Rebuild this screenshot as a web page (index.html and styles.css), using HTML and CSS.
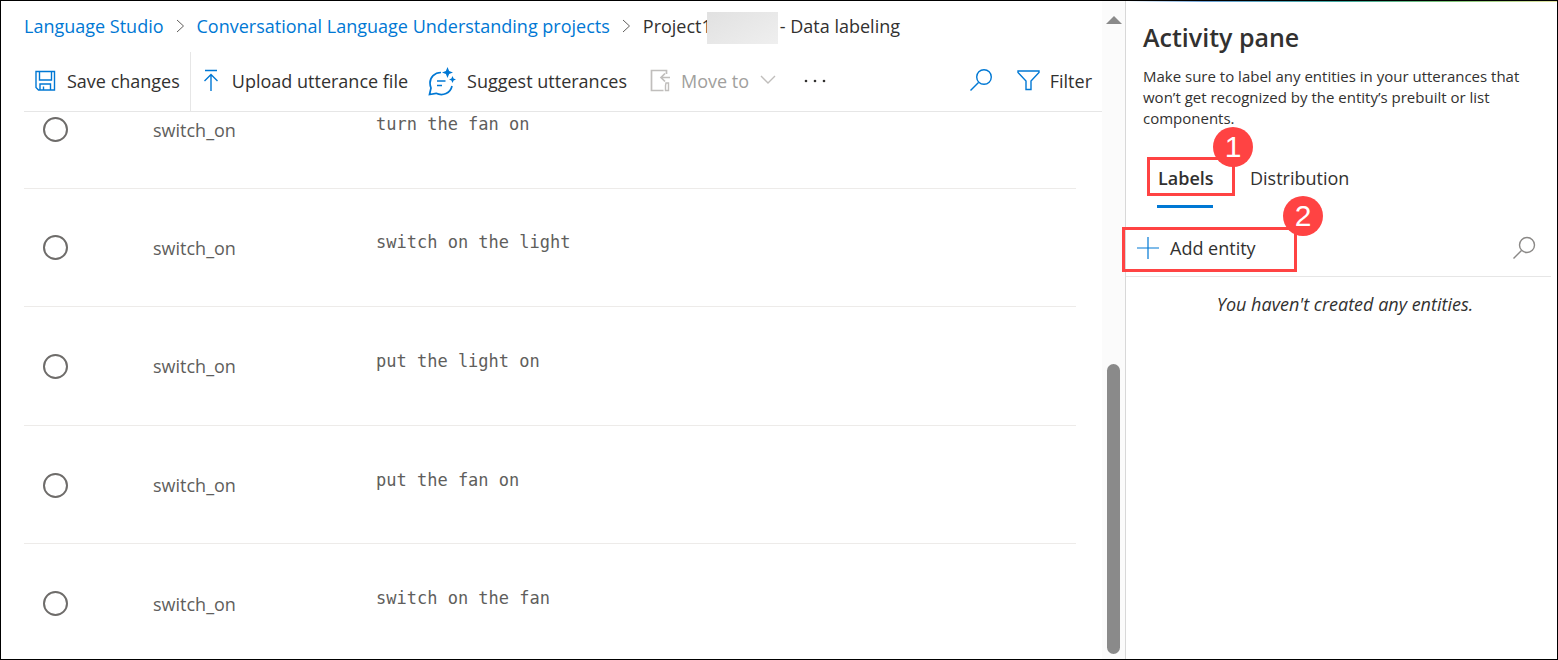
FILE: index.html
```html
<!DOCTYPE html>
<html lang="en">
<head>
<meta charset="utf-8">
<title>Data labeling - Language Studio</title>
<link rel="stylesheet" href="styles.css">
</head>
<body>
<div class="app">
  <main class="content">
    <nav class="crumbs" aria-label="Breadcrumb">
      <a href="#">Language Studio</a>
      <svg class="crumb-arrow" width="9" height="16" viewBox="0 0 9 16"><path d="M1 2l6.500 6L1 14"/></svg>
      <a href="#">Conversational Language Understanding projects</a>
      <svg class="crumb-arrow" width="9" height="16" viewBox="0 0 9 16"><path d="M1 2l6.500 6L1 14"/></svg>
      <span class="crumb-current">Project1<span class="redacted"></span>- Data labeling</span>
    </nav>
    <div class="toolbar">
      <button class="tool save" type="button">
        <svg width="21" height="22" viewBox="0 0 21 22"><path d="M1 1.500h18.500v18.500H3.500L1 17.500zM4.500 1.500v8.500h12v-8.500M5 20v-6h10.500v6M8.500 20v-3.500"/></svg>
        Save changes
      </button>
      <button class="tool upload" type="button">
        <svg width="16" height="24" viewBox="0 0 16 24"><path d="M2 1.500h12M8 22V5.500M1.500 12L8 5.500l6.500 6.500"/></svg>
        Upload utterance file
      </button>
      <button class="tool suggest" type="button">
        <svg width="28" height="30" viewBox="0 0 28 30"><path class="medium" d="M13 6.500C6.500 6.500 2 11.500 2 17c0 2 .4 3.500 1 5l-1.500 6.500 6.500-1.200c7 3.200 14.500-.3 16-7.300M9 15h8.500M9 19.500h5"/><path class="solid" d="M19.500 1l1.600 3.900L25 6.500l-3.900 1.600-1.600 3.900-1.600-3.900L14 6.500l3.900-1.600zM24.500 10l1.100 2.400 2.400 1.100-2.400 1.100-1.100 2.400-1.100-2.400-2.400-1.100 2.400-1.100z"/></svg>
        Suggest utterances
      </button>
      <button class="tool move" type="button" disabled>
        <svg width="20" height="24" viewBox="0 0 20 24"><path class="medium" d="M16.500 5V1.500H1.500v20h12M20 8.500h-8.500M15 4.500l-4 4 4 4"/><path d="M16 14h2.500v7.500h-3v-5z"/></svg>
        Move to
        <svg width="16" height="12" viewBox="0 0 16 12"><path d="M1 1l7 7 7-7"/></svg>
      </button>
      <button class="tool more" type="button" aria-label="More">
        <svg width="22" height="4" viewBox="0 0 22 4"><circle cx="2" cy="2" r="1.300"/><circle cx="11" cy="2" r="1.300"/><circle cx="20" cy="2" r="1.300"/></svg>
      </button>
      <button class="tool find" type="button" aria-label="Search">
        <svg width="24" height="24" viewBox="0 0 24 24"><circle cx="15" cy="8" r="7.300"/><path d="M9.500 13.500L1.500 21.500"/></svg>
      </button>
      <button class="tool filter" type="button">
        <svg width="23" height="22" viewBox="0 0 23 22"><path d="M1 1h21v1.500l-8 8.500v8.500h-5v-8.500L1 2.500z"/></svg>
        Filter
      </button>
    </div>
    <div class="list">
      <table class="utterances">
        <tbody>
          <tr><td class="pick"><input type="radio" name="utterance" aria-label="turn the fan on"></td><td class="intent">switch_on</td><td class="text">turn the fan on</td></tr>
          <tr><td class="pick"><input type="radio" name="utterance" aria-label="switch on the light"></td><td class="intent">switch_on</td><td class="text">switch on the light</td></tr>
          <tr><td class="pick"><input type="radio" name="utterance" aria-label="put the light on"></td><td class="intent">switch_on</td><td class="text">put the light on</td></tr>
          <tr><td class="pick"><input type="radio" name="utterance" aria-label="put the fan on"></td><td class="intent">switch_on</td><td class="text">put the fan on</td></tr>
          <tr><td class="pick"><input type="radio" name="utterance" aria-label="switch on the fan"></td><td class="intent">switch_on</td><td class="text">switch on the fan</td></tr>
        </tbody>
      </table>
    </div>
  </main>
  <div class="scrollbar">
    <svg width="16" height="8" viewBox="0 0 16 8"><path d="M0 8L8 0l8 8z"/></svg>
    <div class="thumb"></div>
  </div>
  <aside class="pane">
    <h1>Activity pane</h1>
    <p class="hint">Make sure to label any entities in your utterances that won’t get recognized by the entity’s prebuilt or list components.</p>
    <div class="tabs" role="tablist">
      <div class="tab-mark">
        <button class="tab active" type="button" role="tab" aria-selected="true">Labels</button>
        <span class="badge">1</span>
      </div>
      <button class="tab" type="button" role="tab" aria-selected="false">Distribution</button>
    </div>
    <div class="entity-bar">
      <div class="add-mark">
        <button class="add" type="button">
          <svg width="22" height="22" viewBox="0 0 22 22"><path d="M11 0v22M0 11h22"/></svg>
          Add entity
        </button>
        <span class="badge">2</span>
      </div>
      <button class="entity-find" type="button" aria-label="Search entities">
        <svg width="24" height="24" viewBox="0 0 24 24"><circle cx="15" cy="9" r="7.500"/><path d="M9.500 14.500L1.500 22.500"/></svg>
      </button>
    </div>
    <p class="empty">You haven't created any entities.</p>
  </aside>
</div>
</body>
</html>
```
FILE: styles.css
```css
* { box-sizing: border-box; }
body {
  margin: 0;
  background: #fff;
  color: #323130;
  font: 18px/24px "Segoe UI", "Open Sans", "Noto Sans", sans-serif;
}
button {
  padding: 0;
  border: 0;
  background: none;
  color: inherit;
  font: inherit;
  white-space: nowrap;
}
svg { flex: none; fill: none; stroke: currentColor; stroke-width: 1.4; }
.app {
  display: flex;
  height: 100vh;
  border: 1px solid #000;
}
.content {
  display: flex;
  flex: 1;
  flex-direction: column;
  min-width: 0;
  padding-left: 23px;
}
.crumbs {
  display: flex;
  align-items: center;
  gap: 12px;
  height: 50px;
  white-space: nowrap;
}
.crumbs a { color: #0078d4; text-decoration: none; }
.crumb-arrow { color: #605e5c; stroke-width: 1; }
.crumb-current { display: flex; align-items: center; }
.redacted {
  width: 71px;
  height: 32px;
  margin: 4px 2px 0 -5px;
  background: linear-gradient(150deg, #e1e1e1, #efefef);
}
.toolbar {
  display: flex;
  flex: none;
  height: 61px;
  padding-top: 1px;
  border-bottom: 1px solid #e6e6e6;
}
.tool { display: flex; align-items: center; gap: 11px; padding-bottom: 2px; }
.tool svg { color: #0078d4; }
.tool .medium { stroke-width: 1.7; }
.tool .solid { fill: #0078d4; stroke: none; }
.save { padding-left: 11px; padding-right: 10px; border-right: 1px solid #e6e6e6; }
.upload { padding-left: 12px; gap: 13px; }
.suggest { padding-left: 20px; }
.tool.move { padding-left: 23px; color: #a19f9d; }
.tool.move svg { color: #c0bebc; }
.more { padding-left: 28px; }
.tool.more svg { color: #323130; fill: #323130; stroke: none; }
.find { margin-left: auto; }
.filter { padding-left: 24px; padding-right: 10px; gap: 10px; }
.list { flex: 1; min-height: 0; overflow: hidden; }
.utterances {
  width: calc(100% - 26px);
  height: 592px;
  margin-top: -41px;
  border-collapse: collapse;
  color: #605e5c;
}
.utterances td { padding: 1px 0 0; border-bottom: 1px solid #edebe9; }
.pick { width: 129px; }
.pick input {
  display: block;
  width: 25px;
  height: 25px;
  margin: 0 0 0 19px;
  border: 2px solid #6e6c6a;
  border-radius: 50%;
  appearance: none;
}
.intent { width: 223px; }
.utterances .text {
  padding-bottom: 11px;
  font: 17px/24px Consolas, "DejaVu Sans Mono", monospace;
}
.scrollbar {
  display: flex;
  flex: none;
  flex-direction: column;
  align-items: center;
  width: 23px;
  padding: 15px 0 5px;
  background: #fbfbfb;
}
.scrollbar svg { fill: #8a8a8a; stroke: none; }
.thumb {
  width: 13px;
  height: 290px;
  margin-top: auto;
  border-radius: 7px;
  background: #8a8a8a;
}
.pane {
  flex: none;
  width: 432px;
  border-left: 1px solid #d8d8d8;
  background: linear-gradient(90deg, #fff, #6fa3d8 18%, #3fa9a0 50%, #7cc576 75%, #e3e3a0) top / 100% 1px no-repeat;
}
h1 {
  margin: 19px 0 0 17px;
  font-size: 25px;
  font-weight: 600;
  line-height: 34px;
}
.hint {
  margin: 12px 20px 0 17px;
  font-size: 15px;
  line-height: 21px;
}
.tabs {
  display: flex;
  gap: 15px;
  height: 39px;
  margin: 28px 0 31px 21px;
}
.tab { padding-top: 3px; }
.tab-mark, .add-mark { position: relative; border: 3px solid #ff4343; }
.tab-mark { width: 88px; padding-left: 7px; }
.tab.active { height: 33px; padding: 3px 1px 0; font-weight: 600; }
.tab.active::after {
  content: "";
  position: absolute;
  bottom: -15px;
  left: 7px;
  width: 56px;
  height: 3px;
  background: #0078d4;
}
.badge {
  position: absolute;
  width: 40px;
  height: 40px;
  border-radius: 50%;
  background: #ff4343;
  color: #fff;
  font: 30px/40px "Liberation Sans", Arial, sans-serif;
  text-align: center;
}
.tab-mark .badge { top: -33px; right: -21px; }
.entity-bar {
  display: flex;
  align-items: flex-start;
  justify-content: space-between;
  height: 50px;
  margin-right: 6px;
  border-bottom: 1px solid #e6e6e6;
}
.add-mark { margin-left: -4px; }
.add { display: flex; align-items: center; gap: 11px; width: 169px; height: 39px; padding: 0 0 4px 12px; }
.add svg { color: #0078d4; stroke-width: 1.2; }
.add-mark .badge { top: -34px; right: -29px; }
.entity-find { display: flex; align-items: center; height: 41px; padding-right: 15px; color: #8a8886; }
.empty { margin: 15px 0 0 7px; text-align: center; font-style: italic; }
```
